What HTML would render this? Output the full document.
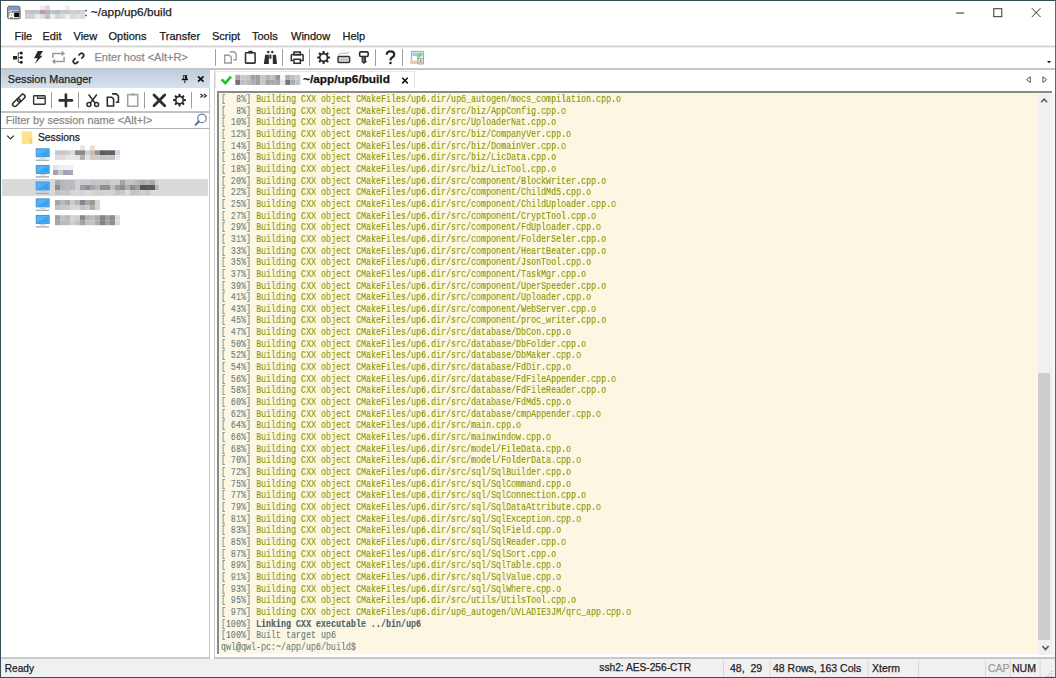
<!DOCTYPE html>
<html><head><meta charset="utf-8">
<style>
*{margin:0;padding:0;box-sizing:border-box}
html,body{width:1056px;height:678px;overflow:hidden;background:#fff}
body{position:relative;font-family:"Liberation Sans",sans-serif;color:#1a1a1a}
.a{position:absolute}
.t{position:absolute;white-space:pre;line-height:1;-webkit-text-stroke:0.25px currentColor}
svg{position:absolute;overflow:visible}
/* window frame */
#fr{position:absolute;left:0;top:0;width:1056px;height:678px;border:1px solid #3a4c54;border-right-color:#566a72;pointer-events:none;z-index:50}
/* terminal */
#term{position:absolute;left:219px;top:93px;width:818px;height:561px;background:#fdf6e3;overflow:hidden}
#tt{position:absolute;left:1.7px;top:1.2px;-webkit-text-stroke:0.15px currentColor;font-family:"Liberation Mono",monospace;font-size:10.5px;line-height:11.66px;white-space:pre;transform:scaleX(0.79365);transform-origin:0 0;will-change:transform;color:#657b83}
.g{color:#657b83}.y{color:#859900}.b{color:#48616b;font-weight:bold}
</style></head><body>
<div id="fr"></div>

<!-- ===== title bar ===== -->
<div class="t" id="ttl" style="left:84.3px;top:7.3px;font-size:11.8px;color:#222">: ~/app/up6/build</div>

<!-- ===== menu ===== -->
<div class="t" style="left:14.5px;top:30.8px;font-size:11px">File</div>
<div class="t" style="left:42.5px;top:30.8px;font-size:11px">Edit</div>
<div class="t" style="left:73.5px;top:30.8px;font-size:11px">View</div>
<div class="t" style="left:108.5px;top:30.8px;font-size:11px">Options</div>
<div class="t" style="left:159.5px;top:30.8px;font-size:11px">Transfer</div>
<div class="t" style="left:212px;top:30.8px;font-size:11px">Script</div>
<div class="t" style="left:252px;top:30.8px;font-size:11px">Tools</div>
<div class="t" style="left:291px;top:30.8px;font-size:11px">Window</div>
<div class="t" style="left:342.5px;top:30.8px;font-size:11px">Help</div>
<div class="a" style="left:1px;top:45px;width:1054px;height:3px;background:linear-gradient(#ececec 0 33%,#d2d2d2 33% 66%,#efefef 66%)"></div>

<!-- ===== toolbar ===== -->
<div class="t" style="left:94.5px;top:52px;font-size:11px;color:#8a8a8a">Enter host &lt;Alt+R&gt;</div>
<div class="a" style="left:1px;top:68px;width:1054px;height:2px;background:linear-gradient(#c9c9c9 0 50%,#c2c2c2 50%)"></div>
<div class="a" style="left:215px;top:71px;width:200px;height:17px;border-top:1px solid #e6e6e6;border-left:1px solid #e6e6e6;border-right:1px solid #dedede"></div>

<!-- ===== session manager ===== -->
<div class="a" style="left:1px;top:70px;width:208.5px;height:18px;background:linear-gradient(#bfcedc,#d6e2ed)"></div>
<div class="t" style="left:7.8px;top:73.6px;font-size:10.8px;color:#1e1e1e">Session Manager</div>
<div class="a" style="left:1px;top:111px;width:209px;height:18px;border-top:2px solid #c2c2c2;border-bottom:1px solid #b4b4b4;border-right:1.5px solid #c8c8c8;border-top-right-radius:2px"></div>
<div class="t" style="left:5.7px;top:114.6px;font-size:10.9px;color:#8a8a8a">Filter by session name &lt;Alt+I&gt;</div>
<div class="t" style="left:38px;top:133px;font-size:10.3px;color:#1e1e1e">Sessions</div>
<div class="a" style="left:2px;top:179px;width:206px;height:17px;background:#d9d9d9"></div>
<div class="a" style="left:208.5px;top:88px;width:1px;height:570px;background:#c8c8c8"></div>
<div class="a" style="left:1px;top:657px;width:209px;height:2px;background:#cbcbcb"></div>

<!-- ===== tab strip ===== -->
<div class="a" style="left:214px;top:69px;width:1px;height:589px;background:#d0d0d0"></div>
<div class="t" style="left:303px;top:73.8px;font-size:11.8px;font-weight:bold;color:#111">~/app/up6/build</div>

<!-- ===== terminal ===== -->
<div class="a" style="left:217px;top:91px;width:835px;height:2px;background:#8a8a8a"></div>
<div class="a" style="left:217px;top:91px;width:2px;height:563px;background:#8a8a8a"></div>
<div class="a" style="left:214px;top:657px;width:841px;height:2px;background:#c6c6c6"></div>
<div id="term"><div id="tt"><div><span class="g">[  8%]</span> <span class="y">Building CXX object CMakeFiles/up6.dir/up6_autogen/mocs_compilation.cpp.o</span></div><div><span class="g">[  8%]</span> <span class="y">Building CXX object CMakeFiles/up6.dir/src/biz/AppConfig.cpp.o</span></div><div><span class="g">[ 10%]</span> <span class="y">Building CXX object CMakeFiles/up6.dir/src/UploaderNat.cpp.o</span></div><div><span class="g">[ 12%]</span> <span class="y">Building CXX object CMakeFiles/up6.dir/src/biz/CompanyVer.cpp.o</span></div><div><span class="g">[ 14%]</span> <span class="y">Building CXX object CMakeFiles/up6.dir/src/biz/DomainVer.cpp.o</span></div><div><span class="g">[ 16%]</span> <span class="y">Building CXX object CMakeFiles/up6.dir/src/biz/LicData.cpp.o</span></div><div><span class="g">[ 18%]</span> <span class="y">Building CXX object CMakeFiles/up6.dir/src/biz/LicTool.cpp.o</span></div><div><span class="g">[ 20%]</span> <span class="y">Building CXX object CMakeFiles/up6.dir/src/component/BlockWriter.cpp.o</span></div><div><span class="g">[ 22%]</span> <span class="y">Building CXX object CMakeFiles/up6.dir/src/component/ChildMd5.cpp.o</span></div><div><span class="g">[ 25%]</span> <span class="y">Building CXX object CMakeFiles/up6.dir/src/component/ChildUploader.cpp.o</span></div><div><span class="g">[ 27%]</span> <span class="y">Building CXX object CMakeFiles/up6.dir/src/component/CryptTool.cpp.o</span></div><div><span class="g">[ 29%]</span> <span class="y">Building CXX object CMakeFiles/up6.dir/src/component/FdUploader.cpp.o</span></div><div><span class="g">[ 31%]</span> <span class="y">Building CXX object CMakeFiles/up6.dir/src/component/FolderSeler.cpp.o</span></div><div><span class="g">[ 33%]</span> <span class="y">Building CXX object CMakeFiles/up6.dir/src/component/HeartBeater.cpp.o</span></div><div><span class="g">[ 35%]</span> <span class="y">Building CXX object CMakeFiles/up6.dir/src/component/JsonTool.cpp.o</span></div><div><span class="g">[ 37%]</span> <span class="y">Building CXX object CMakeFiles/up6.dir/src/component/TaskMgr.cpp.o</span></div><div><span class="g">[ 39%]</span> <span class="y">Building CXX object CMakeFiles/up6.dir/src/component/UperSpeeder.cpp.o</span></div><div><span class="g">[ 41%]</span> <span class="y">Building CXX object CMakeFiles/up6.dir/src/component/Uploader.cpp.o</span></div><div><span class="g">[ 43%]</span> <span class="y">Building CXX object CMakeFiles/up6.dir/src/component/WebServer.cpp.o</span></div><div><span class="g">[ 45%]</span> <span class="y">Building CXX object CMakeFiles/up6.dir/src/component/proc_writer.cpp.o</span></div><div><span class="g">[ 47%]</span> <span class="y">Building CXX object CMakeFiles/up6.dir/src/database/DbCon.cpp.o</span></div><div><span class="g">[ 50%]</span> <span class="y">Building CXX object CMakeFiles/up6.dir/src/database/DbFolder.cpp.o</span></div><div><span class="g">[ 52%]</span> <span class="y">Building CXX object CMakeFiles/up6.dir/src/database/DbMaker.cpp.o</span></div><div><span class="g">[ 54%]</span> <span class="y">Building CXX object CMakeFiles/up6.dir/src/database/FdDir.cpp.o</span></div><div><span class="g">[ 56%]</span> <span class="y">Building CXX object CMakeFiles/up6.dir/src/database/FdFileAppender.cpp.o</span></div><div><span class="g">[ 58%]</span> <span class="y">Building CXX object CMakeFiles/up6.dir/src/database/FdFileReader.cpp.o</span></div><div><span class="g">[ 60%]</span> <span class="y">Building CXX object CMakeFiles/up6.dir/src/database/FdMd5.cpp.o</span></div><div><span class="g">[ 62%]</span> <span class="y">Building CXX object CMakeFiles/up6.dir/src/database/cmpAppender.cpp.o</span></div><div><span class="g">[ 64%]</span> <span class="y">Building CXX object CMakeFiles/up6.dir/src/main.cpp.o</span></div><div><span class="g">[ 66%]</span> <span class="y">Building CXX object CMakeFiles/up6.dir/src/mainwindow.cpp.o</span></div><div><span class="g">[ 68%]</span> <span class="y">Building CXX object CMakeFiles/up6.dir/src/model/FileData.cpp.o</span></div><div><span class="g">[ 70%]</span> <span class="y">Building CXX object CMakeFiles/up6.dir/src/model/FolderData.cpp.o</span></div><div><span class="g">[ 72%]</span> <span class="y">Building CXX object CMakeFiles/up6.dir/src/sql/SqlBuilder.cpp.o</span></div><div><span class="g">[ 75%]</span> <span class="y">Building CXX object CMakeFiles/up6.dir/src/sql/SqlCommand.cpp.o</span></div><div><span class="g">[ 77%]</span> <span class="y">Building CXX object CMakeFiles/up6.dir/src/sql/SqlConnection.cpp.o</span></div><div><span class="g">[ 79%]</span> <span class="y">Building CXX object CMakeFiles/up6.dir/src/sql/SqlDataAttribute.cpp.o</span></div><div><span class="g">[ 81%]</span> <span class="y">Building CXX object CMakeFiles/up6.dir/src/sql/SqlException.cpp.o</span></div><div><span class="g">[ 83%]</span> <span class="y">Building CXX object CMakeFiles/up6.dir/src/sql/SqlField.cpp.o</span></div><div><span class="g">[ 85%]</span> <span class="y">Building CXX object CMakeFiles/up6.dir/src/sql/SqlReader.cpp.o</span></div><div><span class="g">[ 87%]</span> <span class="y">Building CXX object CMakeFiles/up6.dir/src/sql/SqlSort.cpp.o</span></div><div><span class="g">[ 89%]</span> <span class="y">Building CXX object CMakeFiles/up6.dir/src/sql/SqlTable.cpp.o</span></div><div><span class="g">[ 91%]</span> <span class="y">Building CXX object CMakeFiles/up6.dir/src/sql/SqlValue.cpp.o</span></div><div><span class="g">[ 93%]</span> <span class="y">Building CXX object CMakeFiles/up6.dir/src/sql/SqlWhere.cpp.o</span></div><div><span class="g">[ 95%]</span> <span class="y">Building CXX object CMakeFiles/up6.dir/src/utils/UtilsTool.cpp.o</span></div><div><span class="g">[ 97%]</span> <span class="y">Building CXX object CMakeFiles/up6.dir/up6_autogen/UVLADIE3JM/qrc_app.cpp.o</span></div><div><span class="g">[100%]</span> <span class="b">Linking CXX executable ../bin/up6</span></div><div><span class="g">[100%]</span> <span class="g">Built target up6</span></div><div><span class="g">qwl@qwl-pc:~/app/up6/build$</span></div></div></div>
<div class="a" style="left:1037px;top:93px;width:15px;height:562px;background:#f0f0f0;border-left:1px solid #f8f8f8"></div>
<div class="a" style="left:1052px;top:93px;width:3px;height:564px;background:#f6f6f6"></div>
<div class="a" style="left:1038px;top:373px;width:12px;height:267px;background:#cdcdcd"></div>

<!-- ===== status bar ===== -->
<div class="a" style="left:1px;top:659px;width:1054px;height:18px;background:#f0f0f0"></div>
<div class="t" style="left:4.8px;top:663.6px;font-size:10.1px;color:#222">Ready</div>
<div class="t" style="left:599.3px;top:663.4px;font-size:10.2px;color:#222">ssh2: AES-256-CTR</div>
<div class="t" style="left:730px;top:663.4px;font-size:10.5px;color:#222">48,  29</div>
<div class="t" style="left:773px;top:663.4px;font-size:10.5px;color:#222">48 Rows, 163 Cols</div>
<div class="t" style="left:872px;top:663.4px;font-size:10.5px;color:#222">Xterm</div>
<div class="t" style="left:988px;top:663px;font-size:10.5px;color:#9a9a9a">CAP</div>
<div class="t" style="left:1012px;top:663.4px;font-size:10.5px;color:#222">NUM</div>

<!-- ===== icons overlay ===== -->
<svg width="1056" height="678" viewBox="0 0 1056 678" style="left:0;top:0;z-index:20" fill="none" stroke-linecap="butt">
<g id="blur"><rect x="40" y="5.5" width="5" height="4.5" fill="#f0eaf0"/><rect x="45" y="5.5" width="5" height="4.5" fill="#dcdce0"/><rect x="65" y="5.5" width="5" height="4.5" fill="#eeeef2"/><rect x="25" y="10.0" width="5" height="4.5" fill="#cdc4bc"/><rect x="30" y="10.0" width="5" height="4.5" fill="#bcc4cc"/><rect x="35" y="10.0" width="5" height="4.5" fill="#c0c8c0"/><rect x="40" y="10.0" width="5" height="4.5" fill="#b0a0b0"/><rect x="45" y="10.0" width="5" height="4.5" fill="#b0b4b8"/><rect x="50" y="10.0" width="5" height="4.5" fill="#c0c4d0"/><rect x="55" y="10.0" width="5" height="4.5" fill="#b8bcc0"/><rect x="60" y="10.0" width="5" height="4.5" fill="#ccc8c0"/><rect x="65" y="10.0" width="5" height="4.5" fill="#c8c8d4"/><rect x="70" y="10.0" width="5" height="4.5" fill="#d0d0d0"/><rect x="75" y="10.0" width="5" height="4.5" fill="#ccccc8"/><rect x="80" y="10.0" width="5" height="4.5" fill="#d4d4d8"/><rect x="25" y="14.5" width="5" height="4.5" fill="#d8d0c8"/><rect x="30" y="14.5" width="5" height="4.5" fill="#c0d4e0"/><rect x="35" y="14.5" width="5" height="4.5" fill="#ececec"/><rect x="40" y="14.5" width="5" height="4.5" fill="#e0dce0"/><rect x="45" y="14.5" width="5" height="4.5" fill="#bcc0c4"/><rect x="50" y="14.5" width="5" height="4.5" fill="#ececec"/><rect x="55" y="14.5" width="5" height="4.5" fill="#d0d4d4"/><rect x="60" y="14.5" width="5" height="4.5" fill="#d4dce0"/><rect x="65" y="14.5" width="5" height="4.5" fill="#f0f0f0"/><rect x="70" y="14.5" width="5" height="4.5" fill="#d8d8d4"/><rect x="75" y="14.5" width="5" height="4.5" fill="#e0e0e4"/><rect x="80" y="14.5" width="5" height="4.5" fill="#e0dcd8"/><rect x="80" y="145.5" width="5" height="4.8" fill="#e6e6e0"/><rect x="90" y="145.5" width="5" height="4.8" fill="#e6e0da"/><rect x="55" y="150.3" width="5" height="4.8" fill="#c4c8cc"/><rect x="60" y="150.3" width="5" height="4.8" fill="#d0c4c4"/><rect x="65" y="150.3" width="5" height="4.8" fill="#c8d0d4"/><rect x="70" y="150.3" width="5" height="4.8" fill="#dcdce0"/><rect x="75" y="150.3" width="5" height="4.8" fill="#8c8890"/><rect x="80" y="150.3" width="5" height="4.8" fill="#888c84"/><rect x="85" y="150.3" width="5" height="4.8" fill="#c8d0dc"/><rect x="90" y="150.3" width="5" height="4.8" fill="#c8b8b0"/><rect x="95" y="150.3" width="5" height="4.8" fill="#8c949c"/><rect x="100" y="150.3" width="5" height="4.8" fill="#5c5c5c"/><rect x="105" y="150.3" width="5" height="4.8" fill="#646060"/><rect x="110" y="150.3" width="5" height="4.8" fill="#606468"/><rect x="115" y="150.3" width="5" height="4.8" fill="#ccd8e4"/><rect x="55" y="155.1" width="5" height="4.8" fill="#d4dce4"/><rect x="60" y="155.1" width="5" height="4.8" fill="#e0d8d8"/><rect x="65" y="155.1" width="5" height="4.8" fill="#e4e8ec"/><rect x="70" y="155.1" width="5" height="4.8" fill="#e8e8ec"/><rect x="75" y="155.1" width="5" height="4.8" fill="#e4e4e0"/><rect x="80" y="155.1" width="5" height="4.8" fill="#b0b0b0"/><rect x="85" y="155.1" width="5" height="4.8" fill="#dce4e4"/><rect x="90" y="155.1" width="5" height="4.8" fill="#d4c8c0"/><rect x="95" y="155.1" width="5" height="4.8" fill="#c8ccd4"/><rect x="100" y="155.1" width="5" height="4.8" fill="#c0c4c0"/><rect x="105" y="155.1" width="5" height="4.8" fill="#c4c8c4"/><rect x="110" y="155.1" width="5" height="4.8" fill="#c0c4c8"/><rect x="115" y="155.1" width="5" height="4.8" fill="#e8ecec"/><rect x="53" y="165" width="5" height="5" fill="#e0e4e8"/><rect x="58" y="165" width="5" height="5" fill="#eeeeee"/><rect x="63" y="165" width="5" height="5" fill="#f0f0f4"/><rect x="68" y="165" width="5" height="5" fill="#f0f0f0"/><rect x="53" y="170" width="5" height="5" fill="#a8a4a8"/><rect x="58" y="170" width="5" height="5" fill="#c8ccc8"/><rect x="63" y="170" width="5" height="5" fill="#a0a0b8"/><rect x="68" y="170" width="5" height="5" fill="#a8a8a8"/><rect x="55" y="180" width="5" height="5" fill="#a8a8a8"/><rect x="60" y="180" width="5" height="5" fill="#b4b8bc"/><rect x="65" y="180" width="5" height="5" fill="#b8bcbc"/><rect x="70" y="180" width="5" height="5" fill="#bcbcc4"/><rect x="75" y="180" width="5" height="5" fill="#d4d0d0"/><rect x="80" y="180" width="5" height="5" fill="#c8ccd0"/><rect x="85" y="180" width="5" height="5" fill="#c8ccd0"/><rect x="90" y="180" width="5" height="5" fill="#c4c4c4"/><rect x="95" y="180" width="5" height="5" fill="#c8c4c4"/><rect x="100" y="180" width="5" height="5" fill="#c8c8c8"/><rect x="105" y="180" width="5" height="5" fill="#c4c4c4"/><rect x="110" y="180" width="5" height="5" fill="#d0d0d4"/><rect x="115" y="180" width="5" height="5" fill="#d0cccc"/><rect x="120" y="180" width="5" height="5" fill="#a4a4a4"/><rect x="125" y="180" width="5" height="5" fill="#c4c4c8"/><rect x="130" y="180" width="5" height="5" fill="#c4c4c4"/><rect x="135" y="180" width="5" height="5" fill="#b8b8b8"/><rect x="140" y="180" width="5" height="5" fill="#acacac"/><rect x="145" y="180" width="5" height="5" fill="#b4b4b4"/><rect x="150" y="180" width="5" height="5" fill="#a8a8a8"/><rect x="55" y="185" width="5" height="5" fill="#908c8c"/><rect x="60" y="185" width="5" height="5" fill="#b4b4b8"/><rect x="65" y="185" width="5" height="5" fill="#b8bcbc"/><rect x="70" y="185" width="5" height="5" fill="#b8b8c0"/><rect x="75" y="185" width="5" height="5" fill="#d0d0d0"/><rect x="80" y="185" width="5" height="5" fill="#a09c9c"/><rect x="85" y="185" width="5" height="5" fill="#8890a0"/><rect x="90" y="185" width="5" height="5" fill="#a8a4a4"/><rect x="95" y="185" width="5" height="5" fill="#b4b8b8"/><rect x="100" y="185" width="5" height="5" fill="#8c9090"/><rect x="105" y="185" width="5" height="5" fill="#909090"/><rect x="110" y="185" width="5" height="5" fill="#c0c0bc"/><rect x="115" y="185" width="5" height="5" fill="#a09c9c"/><rect x="120" y="185" width="5" height="5" fill="#8c8c8c"/><rect x="125" y="185" width="5" height="5" fill="#a8b0b4"/><rect x="130" y="185" width="5" height="5" fill="#8c8c90"/><rect x="135" y="185" width="5" height="5" fill="#a89c94"/><rect x="140" y="185" width="5" height="5" fill="#505454"/><rect x="145" y="185" width="5" height="5" fill="#5c5a58"/><rect x="150" y="185" width="5" height="5" fill="#585858"/><rect x="55" y="190" width="5" height="5" fill="#c4c4c4"/><rect x="60" y="190" width="5" height="5" fill="#c8c8c8"/><rect x="65" y="190" width="5" height="5" fill="#c4c4c0"/><rect x="70" y="190" width="5" height="5" fill="#d4d4d4"/><rect x="75" y="190" width="5" height="5" fill="#d8d8d8"/><rect x="80" y="190" width="5" height="5" fill="#d0d4d8"/><rect x="85" y="190" width="5" height="5" fill="#dcdcdc"/><rect x="90" y="190" width="5" height="5" fill="#d4d4d4"/><rect x="95" y="190" width="5" height="5" fill="#d0d0d0"/><rect x="100" y="190" width="5" height="5" fill="#d0d0d0"/><rect x="105" y="190" width="5" height="5" fill="#d4d4d8"/><rect x="110" y="190" width="5" height="5" fill="#d0d0d0"/><rect x="115" y="190" width="5" height="5" fill="#c0c4c4"/><rect x="120" y="190" width="5" height="5" fill="#c8ccd0"/><rect x="125" y="190" width="5" height="5" fill="#dcdcdc"/><rect x="130" y="190" width="5" height="5" fill="#c4c4c4"/><rect x="135" y="190" width="5" height="5" fill="#c0c8c8"/><rect x="140" y="190" width="5" height="5" fill="#d0d0d0"/><rect x="145" y="190" width="5" height="5" fill="#c8c8c8"/><rect x="150" y="190" width="5" height="5" fill="#d8dce0"/><rect x="155" y="180" width="3.6" height="5" fill="#ccd4dc"/><rect x="155" y="185" width="3.6" height="5" fill="#b0b8c4"/><rect x="155" y="190" width="3.6" height="5" fill="#d8dce0"/><rect x="55" y="200" width="5" height="5" fill="#a4a4a4"/><rect x="60" y="200" width="5" height="5" fill="#b8b8b8"/><rect x="65" y="200" width="5" height="5" fill="#a8aca8"/><rect x="70" y="200" width="5" height="5" fill="#c8c8d0"/><rect x="75" y="200" width="5" height="5" fill="#b4b4b4"/><rect x="80" y="200" width="5" height="5" fill="#8c8488"/><rect x="85" y="200" width="5" height="5" fill="#a4a8b0"/><rect x="90" y="200" width="5" height="5" fill="#9c9890"/><rect x="95" y="200" width="5" height="5" fill="#d0d4e0"/><rect x="55" y="205" width="5" height="5" fill="#c0c0c4"/><rect x="60" y="205" width="5" height="5" fill="#c8c8cc"/><rect x="65" y="205" width="5" height="5" fill="#c8ccc8"/><rect x="70" y="205" width="5" height="5" fill="#d4d8dc"/><rect x="75" y="205" width="5" height="5" fill="#d8d4d0"/><rect x="80" y="205" width="5" height="5" fill="#c4c0c8"/><rect x="85" y="205" width="5" height="5" fill="#c4d0d0"/><rect x="90" y="205" width="5" height="5" fill="#b0aca8"/><rect x="95" y="205" width="5" height="5" fill="#d0d4e0"/><rect x="55" y="215.2" width="5" height="5" fill="#a0a0a0"/><rect x="60" y="215.2" width="5" height="5" fill="#c0c4c4"/><rect x="65" y="215.2" width="5" height="5" fill="#b8bcb4"/><rect x="70" y="215.2" width="5" height="5" fill="#d0d4dc"/><rect x="75" y="215.2" width="5" height="5" fill="#d0ccc8"/><rect x="80" y="215.2" width="5" height="5" fill="#888888"/><rect x="85" y="215.2" width="5" height="5" fill="#b0b4bc"/><rect x="90" y="215.2" width="5" height="5" fill="#bcbcbc"/><rect x="95" y="215.2" width="5" height="5" fill="#b0aca8"/><rect x="100" y="215.2" width="5" height="5" fill="#7c8488"/><rect x="105" y="215.2" width="5" height="5" fill="#a0a09c"/><rect x="110" y="215.2" width="5" height="5" fill="#8c8c8c"/><rect x="115" y="215.2" width="5" height="5" fill="#d4dce4"/><rect x="55" y="220.2" width="5" height="5" fill="#a8a4a4"/><rect x="60" y="220.2" width="5" height="5" fill="#b8bcbc"/><rect x="65" y="220.2" width="5" height="5" fill="#bcbcbc"/><rect x="70" y="220.2" width="5" height="5" fill="#d0d0d0"/><rect x="75" y="220.2" width="5" height="5" fill="#c0c0c0"/><rect x="80" y="220.2" width="5" height="5" fill="#a0a4a4"/><rect x="85" y="220.2" width="5" height="5" fill="#c0c4c8"/><rect x="90" y="220.2" width="5" height="5" fill="#c4c4c4"/><rect x="95" y="220.2" width="5" height="5" fill="#b0a8a4"/><rect x="100" y="220.2" width="5" height="5" fill="#7c8488"/><rect x="105" y="220.2" width="5" height="5" fill="#a4a4a0"/><rect x="110" y="220.2" width="5" height="5" fill="#908c8c"/><rect x="115" y="220.2" width="5" height="5" fill="#d4dce4"/><rect x="235.3" y="74.9" width="5" height="5" fill="#a8a4a8"/><rect x="240.3" y="74.9" width="5" height="5" fill="#c8c8c8"/><rect x="245.3" y="74.9" width="5" height="5" fill="#c4c4bc"/><rect x="250.3" y="74.9" width="5" height="5" fill="#a09cac"/><rect x="255.3" y="74.9" width="5" height="5" fill="#9c9ca0"/><rect x="260.3" y="74.9" width="5" height="5" fill="#c8c8c8"/><rect x="265.3" y="74.9" width="5" height="5" fill="#b4b4b4"/><rect x="270.3" y="74.9" width="5" height="5" fill="#bcc0c8"/><rect x="275.3" y="74.9" width="5" height="5" fill="#a09098"/><rect x="280.3" y="74.9" width="5" height="5" fill="#f0f8f8"/><rect x="285.3" y="74.9" width="5" height="5" fill="#b4aca8"/><rect x="290.3" y="74.9" width="5" height="5" fill="#c0c0c4"/><rect x="295.3" y="74.9" width="5" height="5" fill="#c8ccd0"/><rect x="235.3" y="79.9" width="5" height="5" fill="#787074"/><rect x="240.3" y="79.9" width="5" height="5" fill="#b8c0c8"/><rect x="245.3" y="79.9" width="5" height="5" fill="#c0bcb4"/><rect x="250.3" y="79.9" width="5" height="5" fill="#b0acb8"/><rect x="255.3" y="79.9" width="5" height="5" fill="#a0a0a0"/><rect x="260.3" y="79.9" width="5" height="5" fill="#c8c8c8"/><rect x="265.3" y="79.9" width="5" height="5" fill="#a0a4a8"/><rect x="270.3" y="79.9" width="5" height="5" fill="#a8a8a8"/><rect x="275.3" y="79.9" width="5" height="5" fill="#a8a4ac"/><rect x="280.3" y="79.9" width="5" height="5" fill="#e0e8e8"/><rect x="285.3" y="79.9" width="5" height="5" fill="#7c7470"/><rect x="290.3" y="79.9" width="5" height="5" fill="#a8acb0"/><rect x="295.3" y="79.9" width="5" height="5" fill="#c0c4c8"/></g>
<!-- title icon -->
<g>
<rect x="7.6" y="6.2" width="12.4" height="12.6" rx="1.6" fill="#a4a4a4" stroke="#555" stroke-width="0.9"/>
<rect x="8.8" y="7.2" width="10" height="3" fill="#6f9be6"/>
<rect x="8.8" y="10.2" width="10" height="2" fill="#c4ccd8"/>
<rect x="12.6" y="11.4" width="7.4" height="7.2" fill="#d0d0d0" stroke="#6a6a6a" stroke-width="0.8"/>
<rect x="14.2" y="12.6" width="5" height="4.4" fill="#0a0a0a"/>
<path d="M9.2,18.3 L10.6,13.6 L12.4,13.6 L13.8,18.3 M9.8,16.4 L13.2,16.4" stroke="#fff" stroke-width="1.3"/>
</g>
<!-- window controls -->
<path d="M955.9,13 H964.2" stroke="#333" stroke-width="1"/>
<rect x="993.8" y="8.7" width="8" height="8" stroke="#333" stroke-width="1"/>
<path d="M1031.8,8.2 L1040.5,17 M1040.5,8.2 L1031.8,17" stroke="#333" stroke-width="1"/>

<!-- toolbar 1 -->
<g fill="#222" stroke="none">
<rect x="13" y="56" width="4" height="3.5"/>
<circle cx="21.3" cy="53" r="1.5"/><circle cx="21.3" cy="57.6" r="1.5"/><circle cx="21.3" cy="62.2" r="1.5"/>
</g>
<path d="M18.2,57.6 H21 M18.2,52.6 V62.4 M18.2,53 H20 M18.2,62.2 H20" stroke="#222" stroke-width="0.8"/>
<path d="M37.8,50.9 L43,50.9 L40,55.7 L42.5,55.7 L34.7,63.9 L37.5,58.3 L34,58.3 Z" fill="#2a2a2a"/>
<g stroke="#9a9a9a" stroke-width="1.5">
<path d="M52.8,58 V53.4 H63.4"/><path d="M61.6,51.5 L63.9,53.4 L61.6,55.4"/>
<path d="M64.1,56.8 V61.5 H53.4"/><path d="M55.2,59.6 L52.9,61.5 L55.2,63.5"/>
</g>
<g stroke="#2e2e2e" stroke-width="1.7">
<path d="M75.6,58.2 L73.9,59.9 A2.1,2.1 0 0 0 76.9,62.9 L78.5,61.3"/>
<path d="M78.5,55.5 L80.1,53.9 A2.1,2.1 0 0 1 83.1,56.9 L81.4,58.6"/>
</g>
<!-- separators tb1 -->
<g fill="#9c9c9c">
<rect x="215" y="49.3" width="1" height="16.6"/>
<rect x="282" y="49.3" width="1" height="16.6"/>
<rect x="309" y="49.3" width="1" height="16.6"/>
<rect x="375" y="49.3" width="1" height="16.6"/>
<rect x="402" y="49.3" width="1" height="16.6"/>
</g>
<!-- copy (gray) -->
<g stroke="#9c9c9c" stroke-width="1.4">
<path d="M224.7,55.3 H229.3 L231.3,57.3 V63 H224.7 Z"/>
<path d="M229.7,51.8 H234.2 L236.2,53.8 V59.8 H233.3"/>
</g>
<!-- paste -->
<g stroke="#333" stroke-width="1.6">
<rect x="245.5" y="52.8" width="9.6" height="10.3" rx="0.6"/>
</g>
<rect x="248.2" y="50.8" width="4.6" height="2.6" rx="1" fill="#333"/>
<!-- binoculars -->
<g fill="#2e2e2e">
<circle cx="268.3" cy="52" r="1.2"/><circle cx="272.3" cy="52" r="1.2"/>
<path d="M265.2,54.8 H268.9 V63.9 H263.8 Z"/>
<path d="M272.8,54.8 H276 L277,63.9 H272.8 Z"/>
<rect x="269.4" y="54.6" width="2" height="4.2"/>
</g>
<!-- printer -->
<g stroke="#2e2e2e" stroke-width="1.5">
<rect x="294" y="52" width="6.3" height="2.9"/>
<path d="M293.2,60.6 H291.3 V55.5 Q291.3,54.6 292.2,54.6 H302.2 Q303.1,54.6 303.1,55.5 V60.6 H301"/>
<rect x="294" y="59.3" width="6.3" height="4"/>
</g>
<!-- gear tb -->
<g transform="translate(323.6,57.5)">
<path d="M4.42,-1.27 L6.55,-0.83 L6.55,0.83 L4.42,1.27 L4.02,2.23 L5.22,4.04 L4.04,5.22 L2.23,4.02 L1.27,4.42 L0.83,6.55 L-0.83,6.55 L-1.27,4.42 L-2.23,4.02 L-4.04,5.22 L-5.22,4.04 L-4.02,2.23 L-4.42,1.27 L-6.55,0.83 L-6.55,-0.83 L-4.42,-1.27 L-4.02,-2.23 L-5.22,-4.04 L-4.04,-5.22 L-2.23,-4.02 L-1.27,-4.42 L-0.83,-6.55 L0.83,-6.55 L1.27,-4.42 L2.23,-4.02 L4.04,-5.22 L5.22,-4.04 L4.02,-2.23Z" fill="#2a2a2a"/>
<circle r="3" fill="#fff"/>
</g>
<!-- keyboard -->
<rect x="338" y="56.6" width="11.6" height="6" rx="1" fill="#e4e4e4" stroke="#333" stroke-width="1.5"/><path d="M339.5,59.6 H348.1 M341.4,57.8 V61.6 M343.8,57.8 V61.6 M346.2,57.8 V61.6" stroke="#b0b0b0" stroke-width="0.7"/>
<path d="M338.4,55.6 Q339,53.2 341,53.2 H348 Q348.6,53 348.6,51.6" stroke="#aaa" stroke-width="0.8"/>
<!-- key -->
<rect x="359.6" y="51.9" width="8.6" height="4.6" rx="1.4" stroke="#2e2e2e" stroke-width="1.6"/>
<path d="M361.6,56.5 H366 V60.6 L367,61.8 L363.8,64 L361.6,62 Z" fill="#3a3a3a"/><path d="M363.6,57.5 V61.5" stroke="#9a9a9a" stroke-width="0.8"/>
<!-- ? -->
<path d="M386.7,54.8 C386.7,52.4 388.4,51.4 390.5,51.4 C392.8,51.4 394.3,52.7 394.3,54.6 C394.3,56.5 392.7,57.1 391.5,57.9 C390.7,58.5 390.5,59.2 390.5,60.6" stroke="#2a2a2a" stroke-width="2.2"/>
<circle cx="390.5" cy="63" r="1.3" fill="#2a2a2a"/>
<!-- last icon -->
<rect x="411.5" y="51.4" width="12" height="12" fill="#f4f4f4" stroke="#a8a8a8" stroke-width="1"/>
<rect x="412.5" y="52.5" width="10" height="3.8" fill="#a9c9f2"/>
<ellipse cx="419.4" cy="55.3" rx="3.2" ry="1.9" transform="rotate(-35 419.4 55.3)" fill="#72dc72"/>
<rect x="410.3" y="58" width="7.4" height="6" fill="#e6cdb0"/>
<rect x="412.5" y="56" width="4.5" height="4.5" fill="#fff"/>
<rect x="418" y="58.5" width="5.5" height="5.5" fill="#ececec" stroke="#999" stroke-width="0.8"/><path d="M419.6,63.2 L420.7,59.6 L421.8,63.2" stroke="#777" stroke-width="0.7"/>

<!-- session manager header -->
<path d="M182.9,75.2 H187.1 V79.2 H182.9 Z" fill="#1a1a1a"/><rect x="183.7" y="76" width="1.1" height="3" fill="#cdd9e6"/><path d="M181.7,79.5 H188" stroke="#111" stroke-width="1.4"/><path d="M184.8,80.2 V82.9" stroke="#333" stroke-width="1.2"/>
<path d="M198,76.4 L203.5,81.6 M203.5,76.4 L198,81.6" stroke="#111" stroke-width="1.7"/>

<!-- session toolbar -->
<g stroke="#2e2e2e" stroke-width="1.5">
<rect x="12" y="100.4" width="9" height="4.4" rx="2.2" transform="rotate(-45 16.5 102.6)"/>
<rect x="16.7" y="95.9" width="9" height="4.4" rx="2.2" transform="rotate(-45 21.2 98.1)"/>
</g>
<rect x="33.6" y="95.8" width="11.6" height="8.4" rx="0.6" stroke="#333" stroke-width="1.4"/>
<path d="M37.6,96.3 V98.3 H45" stroke="#333" stroke-width="1.2"/><rect x="38.6" y="96.5" width="2.6" height="1.3" fill="#888"/><rect x="41.8" y="96.5" width="2.6" height="1.3" fill="#888"/>
<g fill="#9c9c9c">
<rect x="51" y="92" width="1" height="16.4"/>
<rect x="78" y="92" width="1" height="16.4"/>
<rect x="144" y="92" width="1" height="16.4"/>
<rect x="191" y="92" width="1" height="16.4"/>
</g>
<path d="M65.9,94.5 V106.3 M59.7,100.4 H72" stroke="#2e2e2e" stroke-width="2.6" stroke-linecap="round"/>
<g stroke="#2e2e2e" stroke-width="1.5">
<path d="M88.6,94.5 L95.2,103.2 M96.8,94.5 L90.2,103.2"/>
<circle cx="88.9" cy="104.4" r="2"/><circle cx="96.6" cy="104.4" r="2"/>
</g>
<g stroke="#2e2e2e" stroke-width="1.6">
<path d="M107.3,97.2 H111.8 L113.6,99 V106 H107.3 Z"/>
<path d="M112.1,93.9 H116.3 L118.4,96 V102.3 H115.8"/>
</g>
<rect x="127.7" y="94.6" width="10" height="11.6" stroke="#a0a0a0" stroke-width="1.5"/>
<rect x="131" y="93.5" width="3.6" height="2" fill="#a0a0a0"/>
<path d="M154,95 L164.7,105.7 M164.7,95 L154,105.7" stroke="#2e2e2e" stroke-width="2.8" stroke-linecap="round"/>
<g transform="translate(179.5,100.1) scale(0.98)">
<path d="M4.42,-1.27 L6.55,-0.83 L6.55,0.83 L4.42,1.27 L4.02,2.23 L5.22,4.04 L4.04,5.22 L2.23,4.02 L1.27,4.42 L0.83,6.55 L-0.83,6.55 L-1.27,4.42 L-2.23,4.02 L-4.04,5.22 L-5.22,4.04 L-4.02,2.23 L-4.42,1.27 L-6.55,0.83 L-6.55,-0.83 L-4.42,-1.27 L-4.02,-2.23 L-5.22,-4.04 L-4.04,-5.22 L-2.23,-4.02 L-1.27,-4.42 L-0.83,-6.55 L0.83,-6.55 L1.27,-4.42 L2.23,-4.02 L4.04,-5.22 L5.22,-4.04 L4.02,-2.23Z" fill="#2a2a2a"/>
<circle r="3" fill="#fff"/>
</g>
<path d="M200.4,94 L202.8,95.8 L200.4,97.6 M203.9,94 L206.3,95.8 L203.9,97.6" stroke="#333" stroke-width="1.3"/>
<!-- search -->
<circle cx="201.9" cy="118.4" r="4.2" stroke="#6080a8" stroke-width="1.2"/>
<path d="M198.8,121.5 L195.5,124.8" stroke="#4a6890" stroke-width="1.8" stroke-linecap="round"/>

<!-- tree -->
<path d="M7.2,135.6 L10.5,138.9 L13.8,135.6" stroke="#333" stroke-width="1.3"/>
<rect x="21.6" y="131.3" width="10.6" height="12.8" rx="0.6" fill="#fce48f"/>
<rect x="29.6" y="138" width="2.8" height="6.1" fill="#f3d36e"/>
<g id="mon">
<rect x="36.2" y="148.8" width="13" height="8" fill="#52b4f7" stroke="#3d8fd6" stroke-width="0.9"/>
<path d="M37,155.8 L48.4,149.6 V156 Z" fill="#3aa2f2"/>
<rect x="39.8" y="157.6" width="6" height="1.1" fill="#c4ccd4"/>
<rect x="35.8" y="159.6" width="13.3" height="1.3" fill="#9aabbc"/>
</g>
<use href="#mon" y="16.6"/>
<use href="#mon" y="33.2"/>
<use href="#mon" y="50.1"/>
<use href="#mon" y="66.6"/>

<!-- tab check -->
<path d="M221.6,79.4 L225.4,83.2 L231,76.6" stroke="#1fc41f" stroke-width="2.6"/>
<path d="M402.2,77.8 L407.8,83.4 M407.8,77.8 L402.2,83.4" stroke="#111" stroke-width="1.5"/>
<!-- tab nav -->
<path d="M1030.3,76.8 L1026.6,79.6 L1030.3,82.5 Z" stroke="#555" stroke-width="1" fill="#fff"/>
<path d="M1042.9,76.8 L1046.6,79.6 L1042.9,82.5 Z" stroke="#555" stroke-width="1" fill="#fff"/>
<path d="M1047,61 L1051,61 L1049,63.3 Z" fill="#111"/>
<!-- scroll arrows -->
<path d="M1041.3,102.2 L1044.2,99 L1047.1,102.2" stroke="#555" stroke-width="1.5"/>
<path d="M1042.4,646 L1045.5,649.6 L1048.6,646" stroke="#555" stroke-width="1.5"/>
<!-- status separators -->
<g fill="#d8d8d8">
<rect x="723" y="660" width="1" height="17"/>
<rect x="769.5" y="660" width="1" height="17"/>
<rect x="867.5" y="660" width="1" height="17"/>
<rect x="918" y="660" width="1" height="17"/>
<rect x="985" y="660" width="1" height="17"/>
<rect x="1009.6" y="660" width="1" height="17"/>
<rect x="1039.6" y="660" width="1" height="17"/>
</g>
<g fill="#a8a8a8">
<rect x="1051" y="671" width="1" height="1"/><rect x="1051" y="673.5" width="1" height="1"/><rect x="1048.5" y="673.5" width="1" height="1"/>
<rect x="1051" y="676" width="1" height="1"/><rect x="1048.5" y="676" width="1" height="1"/><rect x="1046" y="676" width="1" height="1"/>
</g>
</svg>
</body></html>
